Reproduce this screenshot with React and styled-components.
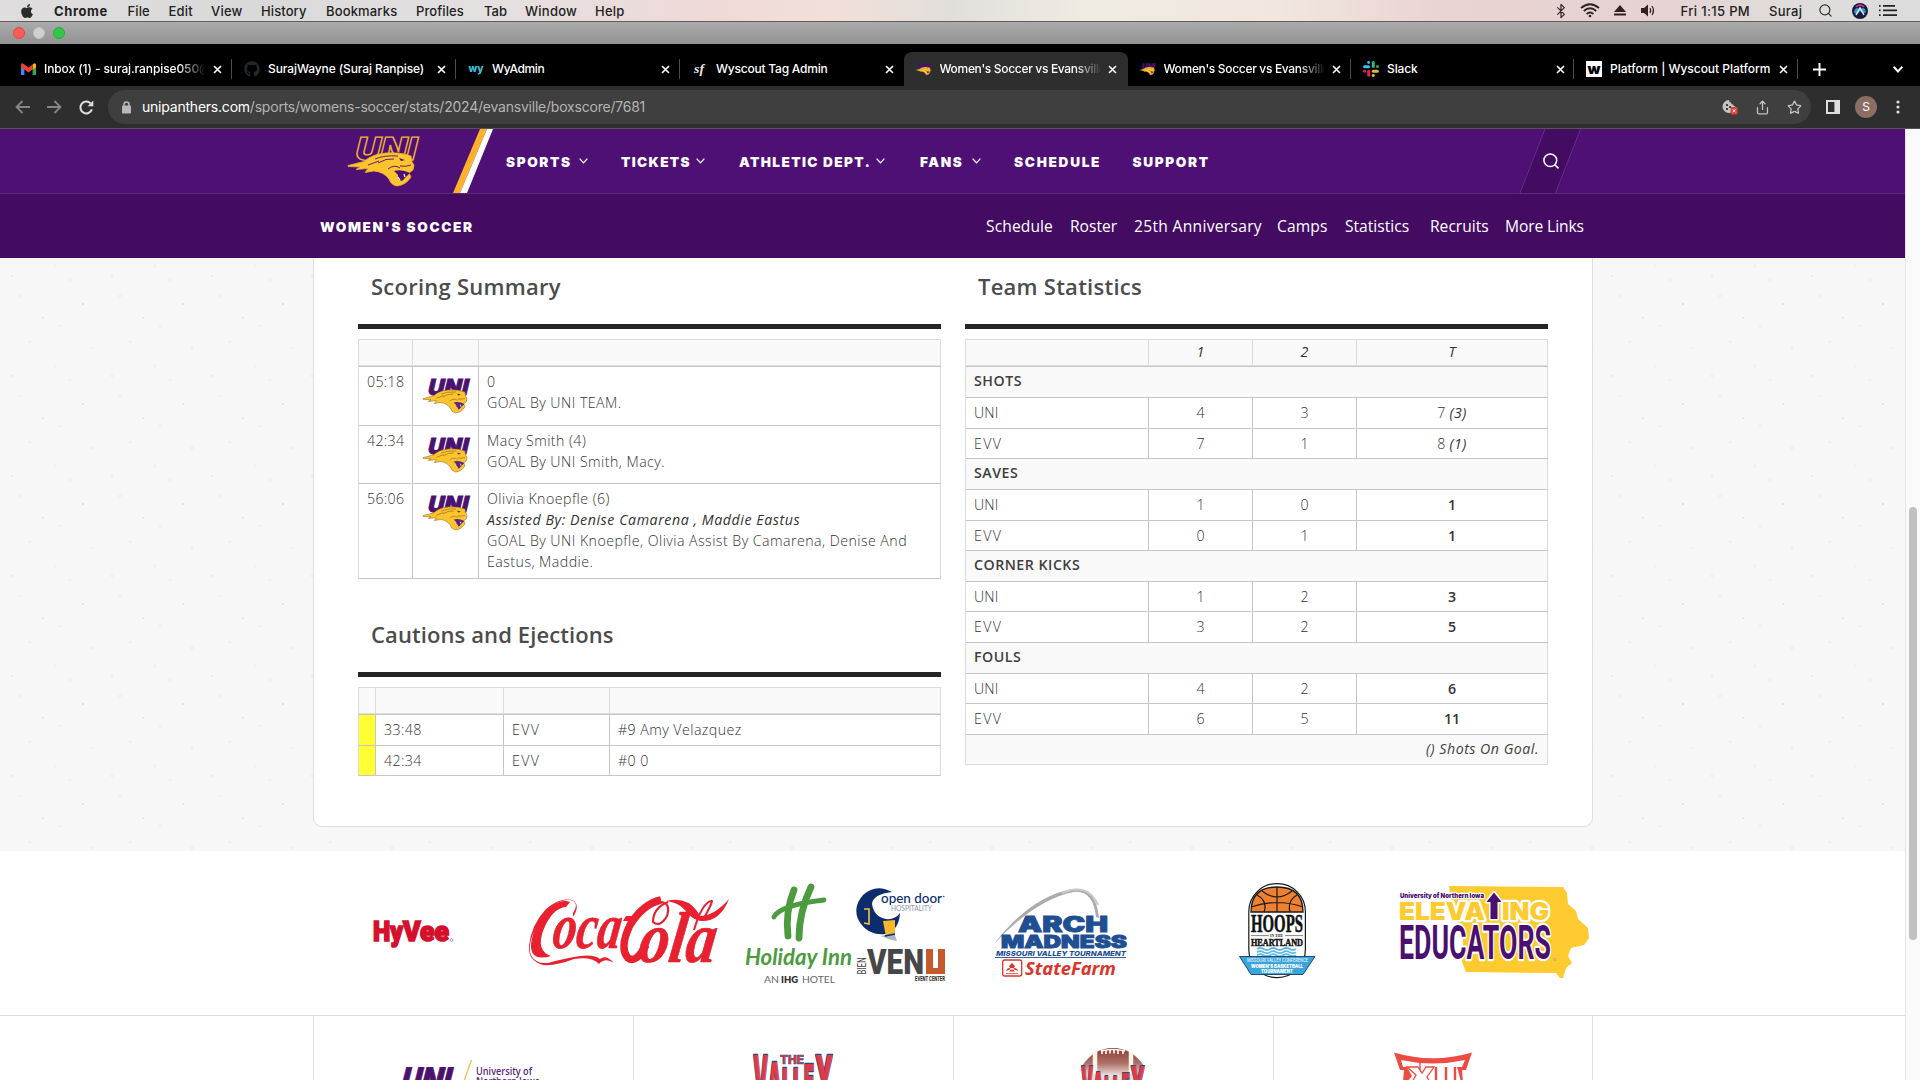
import React from "react";
import styled, { createGlobalStyle } from "styled-components";
import { FaApple, FaGithub } from "react-icons/fa";
import { Search, Star, Share, Bluetooth } from "lucide-react";

const ui = `Inter, "Liberation Sans", sans-serif`;
const body = `"Open Sans", "Noto Sans", sans-serif`;

const Global = createGlobalStyle`
  * { box-sizing: border-box; }
  html, body { margin: 0; padding: 0; overflow: hidden; background: #fff; }
  svg { display: block; flex: none; overflow: visible; }
`;

const Screen = styled.div`
  width: 1920px;
  height: 1080px;
  overflow: hidden;
  display: flex;
  flex-direction: column;
  font-family: ${ui};
  background: #fff;
`;

/* ---------- system menu bar ---------- */
const MenuBar = styled.div`
  height: 22px;
  flex: none;
  display: flex;
  align-items: center;
  border-bottom: 1px solid #665c5a;
  padding: 0 23px 0 20px;
  color: #222;
  font-size: 13px;
  background: linear-gradient(90deg, #dfdddd 0, #dad9d9 260px, #e3e0e0 480px, #efdad8 720px, #f2dfd9 830px, #e2dfdb 950px, #efebe3 1080px, #f1e7df 1280px, #e9d3d3 1440px, #e6d2d2 1650px, #dfdcdb 1790px, #dcdcdc 1920px);
`;
const MenuWord = styled.span`
  width: ${(p) => p.$w}px;
  flex: none;
  white-space: nowrap;
  line-height: 20px;
  letter-spacing: ${(p) => p.$ls || 0}px;
  font-weight: ${(p) => (p.$bold ? 700 : 450)};
`;
const Spacer = styled.div`
  flex: 1;
`;
const MenuIcon = styled.span`
  width: ${(p) => p.$w}px;
  flex: none;
  display: flex;
  justify-content: center;
`;

const TitleStrip = styled.div`
  height: 22px;
  flex: none;
  display: flex;
  align-items: center;
  gap: 8px;
  padding-left: 13px;
  background: linear-gradient(#ababab, #929292);
`;
const Light = styled.span`
  width: 12px;
  height: 12px;
  border-radius: 50%;
  background: ${(p) => p.$c};
  border: 1px solid ${(p) => p.$b};
`;

/* ---------- browser tabs ---------- */
const TabStrip = styled.div`
  height: 42px;
  flex: none;
  display: flex;
  padding: 8px 0 0 8px;
  background: #000;
  color: #fff;
`;
const TabBox = styled.div`
  width: ${(p) => p.$w}px;
  height: 34px;
  flex: none;
  display: flex;
  align-items: center;
  padding-left: 12px;
  background: ${(p) => (p.$active ? "#2e2e2e" : "transparent")};
  border-radius: 8px 8px 0 0;
`;
const TabIcon = styled.span`
  width: 16px;
  display: flex;
  justify-content: center;
  margin-right: 8px;
  flex: none;
`;
const TabTitle = styled.span`
  width: 160px;
  flex: none;
  overflow: hidden;
  white-space: nowrap;
  font-size: 12px;
  font-weight: 500;
  line-height: 20px;
  letter-spacing: ${(p) => p.$ls || 0}px;
  mask-image: ${(p) => (p.$fade ? "linear-gradient(90deg, #000 134px, transparent 162px)" : "none")};
`;
const TabClose = styled.span`
  width: 26px;
  display: flex;
  justify-content: center;
`;
const TabRule = styled.span`
  width: 1px;
  height: 20px;
  margin-left: auto;
  background: ${(p) => (p.$hide ? "transparent" : "#4a4a4a")};
`;
const StripButton = styled.span`
  width: ${(p) => p.$w}px;
  height: 34px;
  display: flex;
  align-items: center;
  justify-content: center;
  margin-left: ${(p) => p.$ml || 0}px;
`;

const Toolbar = styled.div`
  height: 43px;
  flex: none;
  display: flex;
  align-items: center;
  background: #2e2e2e;
  border-bottom: 1px solid #555;
  padding-left: 6px;
`;
const ToolButton = styled.span`
  width: ${(p) => p.$w || 32}px;
  flex: none;
  display: flex;
  justify-content: center;
  color: ${(p) => p.$c || "#dedede"};
`;
const Address = styled.div`
  width: 1703px;
  height: 34px;
  flex: none;
  margin-left: 6px;
  border-radius: 17px;
  background: #3f3f3f;
  display: flex;
  align-items: center;
  padding: 0 1px 0 13px;
  font-size: 14px;
  line-height: 20px;
  letter-spacing: ${(p) => p.$ls}px;
  color: #b4b4b4;
`;
const Host = styled.span`
  color: #fff;
  margin-left: 10px;
`;
const Avatar = styled.span`
  width: 22px;
  height: 22px;
  flex: none;
  border-radius: 50%;
  background: #8d6e64;
  color: #fff;
  font-size: 12px;
  line-height: 22px;
  text-align: center;
  margin-right: 10px;
`;

/* ---------- site ---------- */
const Viewport = styled.div`
  flex: 1;
  display: flex;
  min-height: 0;
`;
const Site = styled.div`
  width: 1905px;
  flex: none;
  overflow: hidden;
`;
const ScrollTrack = styled.div`
  width: 15px;
  background: #fafafa;
  border-left: 1px solid #e6e6e6;
  padding: 378px 0 0 3px;
`;
const ScrollThumb = styled.div`
  width: 8px;
  height: 433px;
  border-radius: 4px;
  background: #c1c1c1;
`;

const MainNav = styled.nav`
  height: 65px;
  display: flex;
  align-items: center;
  background: #4f1075;
  border-bottom: 1px solid #5d2a7d;
  padding-left: 348px;
`;
const Slash = styled.div`
  margin: 0 13px 0 33px;
`;
const NavItem = styled.div`
  width: ${(p) => p.$w}px;
  flex: none;
  display: flex;
  align-items: center;
  color: #fff;
  font-size: 13.6px;
  font-weight: 900;
  line-height: 20px;
  white-space: nowrap;
`;
const NavLabel = styled.span`
  width: ${(p) => p.$w}px;
  padding-top: 2px;
  letter-spacing: ${(p) => p.$ls}px;
`;
const Chevron = styled.span`
  margin-left: 8px;
`;
const SearchBox = styled.div`
  margin-left: auto;
  margin-right: 324px;
`;

const SportNav = styled.nav`
  height: 64px;
  display: flex;
  align-items: center;
  background: #430c62;
  color: #fff;
  padding: 1px 0 0 320px;
`;
const SportName = styled.span`
  width: 666px;
  font-size: 13.6px;
  font-weight: 900;
  letter-spacing: 1.66px;
`;
const SportLink = styled.span`
  width: ${(p) => p.$w}px;
  flex: none;
  white-space: nowrap;
  font-family: ${body};
  font-size: 15.6px;
  font-weight: 500;
  padding-bottom: 2px;
  letter-spacing: ${(p) => p.$ls || 0}px;
`;

const Paper = styled.main`
  height: 593px;
  padding-left: 313px;
  background-color: #f7f7f7;
  background-image:
    radial-gradient(circle at 12px 18px, #e9e9e9 0.6px, transparent 1.3px),
    radial-gradient(circle at 83px 46px, #dadada 0.5px, transparent 1.2px),
    radial-gradient(circle at 43px 60px, #e0e0e0 0.5px, transparent 1.2px),
    radial-gradient(circle at 60px 68px, #ebebeb 0.6px, transparent 1.3px),
    radial-gradient(circle at 30px 84px, #eeeeee 1px, transparent 1.8px),
    radial-gradient(circle at 20px 38px, #f0f0f0 1px, transparent 2px),
    radial-gradient(circle at 70px 22px, #f0f0f0 1px, transparent 2px),
    radial-gradient(circle at 55px 8px, #f1f1f1 1px, transparent 2px),
    radial-gradient(circle at 92px 90px, #efefef 1px, transparent 2px);
  background-size: 100px 100px;
`;
const Card = styled.section`
  width: 1280px;
  height: 569px;
  background: #fff;
  border: 1px solid #dedede;
  border-top: none;
  border-radius: 0 0 9px 9px;
  padding-left: 44px;
  display: flex;
  gap: 24px;
  font-family: ${body};
  font-size: 14.2px;
  font-weight: 300;
  color: #333;
  letter-spacing: 0.45px;
`;
const Column = styled.div`
  width: 583px;
`;
const Heading = styled.h2`
  margin: ${(p) => p.$mt || 0}px 0 10px;
  height: 71px;
  border-bottom: 5px solid #252525;
  padding-left: 13px;
  font-size: 22px;
  font-weight: 600;
  line-height: 56px;
  color: #4c4c4c;
  letter-spacing: ${(p) => p.$ls ?? 0.25}px;
`;
const Grid = styled.div`
  border-left: 1px solid #dcdcdc;
`;
const HeadRow = styled.div`
  height: 28px;
  display: grid;
  grid-template-columns: ${(p) => p.$cols};
  background: #f9f9f9;
  border-top: 1px solid #dcdcdc;
  border-bottom: 1px solid #c6c6c6;
  box-shadow: inset 0 -1px #dedede;
`;
const HeadCell = styled.div`
  border-right: 1px solid #dcdcdc;
  text-align: center;
  font-style: italic;
  font-weight: 500;
  font-size: 14.2px;
  line-height: 24px;
  letter-spacing: 0;
`;
const Row = styled.div`
  height: ${(p) => p.$h}px;
  display: grid;
  grid-template-columns: ${(p) => p.$cols};
  border-bottom: 1px solid #c6c6c6;
`;
const Cell = styled.div`
  border-right: 1px solid #c6c6c6;
  padding: ${(p) => (p.$tall ? "3.6px 0 0 8px" : "0 0 0 8px")};
  line-height: ${(p) => (p.$tall ? 21.3 : 29)}px;
  white-space: nowrap;
  letter-spacing: ${(p) => p.$ls ?? 0.45}px;
  background: ${(p) => p.$bg || "transparent"};
  &:last-child {
    border-right-color: #dcdcdc;
  }
`;
const NumCell = styled(Cell)`
  padding: 0;
  text-align: center;
  font-weight: ${(p) => (p.$bold ? 600 : 300)};
  letter-spacing: 0;
  i {
    font-weight: 500;
    letter-spacing: 0.4px;
  }
`;
const LogoCell = styled(Cell)`
  padding: 11px 0 0 10px;
`;
const Line = styled.div`
  letter-spacing: ${(p) => (p.$em ? 0.56 : 0.46)}px;
  font-style: ${(p) => (p.$em ? "italic" : "normal")};
  font-weight: ${(p) => (p.$em ? 500 : 300)};
`;
const GroupRow = styled.div`
  height: ${(p) => p.$h}px;
  border-bottom: 1px solid ${(p) => (p.$last ? "#dcdcdc" : "#c6c6c6")};
  border-right: 1px solid #dcdcdc;
  background: #f9f9f9;
  padding: 0 8px 0 8px;
  line-height: 27.5px;
  font-weight: ${(p) => (p.$last ? 500 : 550)};
  color: #3f3f3f;
  font-size: 14.2px;
  text-align: ${(p) => (p.$last ? "right" : "left")};
  font-style: ${(p) => (p.$last ? "italic" : "normal")};
  letter-spacing: ${(p) => (p.$last ? 0.5 : 0.5)}px;
`;

const Sponsors = styled.section`
  height: 165px;
  display: flex;
  align-items: flex-start;
  padding: 29px 0 0 370px;
  border-bottom: 1px solid #dedede;
`;
const SponsorSlot = styled.div`
  margin-left: ${(p) => p.$gap || 0}px;
`;
const Affiliates = styled.section`
  display: grid;
  grid-template-columns: 320px 320px 320px 319px;
  width: 1280px;
  height: 64px;
  margin-left: 313px;
  border-left: 1px solid #dedede;
`;
const Affiliate = styled.div`
  border-right: 1px solid #dedede;
  display: flex;
  padding-left: ${(p) => p.$pl}px;
`;

/* ---------- drawings ---------- */
const T = ({ w, size, weight = 700, font = "Inter", ...rest }) => (
  <text
    textLength={w}
    lengthAdjust="spacingAndGlyphs"
    fontSize={size}
    fontWeight={weight}
    fontFamily={`${font}, "Liberation Sans", sans-serif`}
    {...rest}
  />
);

const Panther = ({ w, h, outline }) => (
  <svg width={w} height={h} viewBox="0 0 72 50" preserveAspectRatio="none">
    <g transform="skewX(-14)">
      <T
        x="11.5"
        y="24"
        w="61"
        size="31.5"
        weight="900"
        fill={outline ? "#4f1075" : "#4b116f"}
        stroke={outline ? "#f0b13a" : "#4b116f"}
        strokeWidth="1.3"
      >
        UNI
      </T>
    </g>
    <path d="M0 29.5 L16 25.5 Q24 18 38 17 Q52 16 63 20 L64 26 L66 29 L65 34 L61 37 L63 41 Q58 49 49 50 Q43 49 41 43 Q36 36 26 35 L17 36.5 L20 32.5 L8 33.5 L12 31 L0 30.5 Z" fill="#fdc52d" stroke={outline ? "#e9b02f" : "#8a6420"} strokeWidth="0.8" />
    <path d="M46 35 Q54 33 62 37 L58 41 L54 45 Q49 44 50 39 Z" fill={outline ? "#4f1075" : "#5b2480"} />
    <path d="M50 41 l2 3 M56 38 l1 3" stroke="#fff" strokeWidth="1.2" />
    <path d="M27 23 Q36 19 50 20 M30 27 Q38 22 46 23 M20 29 L31 25 M40 33 Q46 28 52 32 M52 30 Q58 31 63 29" fill="none" stroke={outline ? "#4f1075" : "#8a6420"} strokeWidth="0.9" />
    <path d="M51 22 l6 2 l-4 1 z" fill={outline ? "#4f1075" : "#4b2a20"} />
  </svg>
);

const ChevronDown = ({ size = 9, sw = 1.5 }) => (
  <svg width={size} height={size * 0.65} viewBox="0 0 10 6.5" fill="none" stroke="#fff" strokeWidth={sw}>
    <path d="M0.7 0.7 L5 5.4 L9.3 0.7" />
  </svg>
);

const CloseX = () => (
  <svg width="9" height="9" viewBox="0 0 9 9" stroke="#fff" strokeWidth="1.6">
    <path d="M1 1 L8 8 M8 1 L1 8" />
  </svg>
);

const Gmail = () => (
  <svg width="15" height="12" viewBox="0 0 15 12">
    <path d="M0 2 V12 H3.4 V5.5 Z" fill="#4285f4" />
    <path d="M15 2 V12 H11.6 V5.5 Z" fill="#34a853" />
    <path d="M11.6 1.6 L13 .4 Q15 0 15 2 V4.2 L11.6 6.5 Z" fill="#fbbc04" />
    <path d="M3.4 1.6 L7.5 4.6 L11.6 1.6 V6.4 L7.5 9.4 L0 4 V2 Q0 0 2 .4 Z" fill="#ea4335" />
  </svg>
);
const Slack = () => (
  <svg width="16" height="16" viewBox="0 0 16 16">
    <g fill="#36c5f0"><rect x="0" y="4.2" width="7" height="3" rx="1.5" /><rect x="4.2" y="0" width="2.8" height="3" rx="1.4" /></g>
    <g fill="#2eb67d"><rect x="8.8" y="0" width="3" height="7" rx="1.5" /><rect x="13" y="4.2" width="3" height="2.8" rx="1.4" /></g>
    <g fill="#ecb22e"><rect x="8.8" y="8.8" width="7" height="3" rx="1.5" /><rect x="8.8" y="13" width="3" height="3" rx="1.4" /></g>
    <g fill="#e01e5a"><rect x="4.2" y="8.8" width="3" height="7" rx="1.5" /><rect x="0" y="8.8" width="3" height="3" rx="1.4" /></g>
  </svg>
);
const Wy = () => (
  <svg width="16" height="16" viewBox="0 0 16 16">
    <T x="0.5" y="11" w="15" size="11" weight="800" fill="#3cc0dc">wy</T>
  </svg>
);
const Sf = () => (
  <svg width="14" height="16" viewBox="0 0 14 16">
    <T x="1" y="12" w="10" size="13" font="Liberation Serif" fontStyle="italic" fill="#e8e8e8">sf</T>
  </svg>
);
const WBadge = () => (
  <svg width="16" height="16" viewBox="0 0 16 16">
    <rect width="16" height="16" fill="#fff" />
    <T x="1.5" y="12.5" w="13" size="13" weight="900" fill="#000">w</T>
  </svg>
);

const HyVee = () => (
  <svg width="86" height="104" viewBox="370 880 86 104" fill="#d5102c">
    <T x="373" y="941" w="30" size="28" weight="900" font="Roboto" stroke="#d5102c" strokeWidth="1.7">Hy</T>
    <T x="403" y="941" w="46" size="28" weight="900" font="Roboto" stroke="#d5102c" strokeWidth="1.7">Vee</T>
    <circle cx="451.5" cy="940" r="1.4" fill="none" stroke="#d5102c" strokeWidth="0.5" />
  </svg>
);

const CocaCola = () => (
  <svg width="206" height="104" viewBox="526 880 206 104" fill="#e8202f">
    <g transform="translate(0 947.5) skewX(-8)">
      <T x="551" y="0" w="68" size="64" font="Liberation Serif" fontStyle="italic" stroke="#e8202f" strokeWidth="0.6">oca</T>
    </g>
    <g transform="translate(0 962) skewX(-8)">
      <T x="637" y="0" w="77" size="72" font="Liberation Serif" fontStyle="italic" stroke="#e8202f" strokeWidth="0.6">ola</T>
    </g>
    <path d="M573 913 Q580 902 570 900 Q556 899 543 916 Q528 938 530 952 Q533 964 548 963 Q562 959 580 956 Q594 954 600 959 Q606 954 614 963 Q605 957 599 964 Q592 956 574 959 Q556 966 543 965 Q528 961 529 946 Q531 925 546 909 Q562 896 574 901 Q580 906 573 917 Z" />
    <path d="M566 907 Q552 908 543 931 Q536 951 551 956 Q530 962 531 944 Q535 918 553 905 Q563 899 570 902 Z" />
    <path d="M661 900 Q643 904 630 925 Q619 948 628 958 Q636 964 646 945" fill="none" stroke="#e8202f" strokeWidth="7.5" />
    <path d="M661 902 Q671 903 667 916 Q660 928 653 922 Q653 908 668 902" fill="none" stroke="#e8202f" strokeWidth="2.2" />
    <path d="M666 901 Q686 896 697 911 L700 916 Q714 916 729 899 Q720 922 701 921 Q692 920 684 909 Q677 902 666 901 Z" />
    <path d="M703 920 Q715 898 711 901 Q702 903 694 930" fill="none" stroke="#e8202f" strokeWidth="2" />
    <path d="M626 916 h7 l-2 5 h-8 z" />
  </svg>
);

const Hotels = () => (
  <svg width="206" height="104" viewBox="742 880 206 104">
    <g fill="none" stroke="#4c9b3f" strokeWidth="6.8" strokeLinecap="round">
      <path d="M794 890 Q785 912 788 936" />
      <path d="M811 887 Q799 912 799 938" />
      <path d="M774 917 Q780 905 824 900" strokeWidth="4.8" />
    </g>
    <T x="745" y="965" w="107" size="23" weight="700" font="Lato" fontStyle="italic" fill="#4c9b3f">Holiday Inn</T>
    <T x="764" y="983" w="15" size="9.5" weight="400" font="Lato" fill="#666">AN</T>
    <T x="781" y="983" w="17" size="9.5" weight="800" font="Lato" fill="#333">IHG</T>
    <T x="802" y="983" w="33" size="9.5" weight="400" font="Lato" fill="#666">HOTEL</T>
    <path d="M892 892 Q876 883 863 895 Q852 908 859 921 Q868 936 886 934 Q899 930 900 913 Q895 920 886 919 Q874 917 872 904 Q873 894 892 892 Z" fill="#0c2c6b" />
    <path d="M864 909 h5 v15 l-5 -1" fill="none" stroke="#f7c23c" strokeWidth="1.6" />
    <path d="M883 921 l12 -1 v14 l-9 3 z" fill="#f8b829" />
    <path d="M881 936 l13 -3 l3 8 l-9 -2 z" fill="#a9b4c4" />
    <path d="M885 936 l10 -2" stroke="#0c2c6b" strokeWidth="1.5" />
    <T x="881" y="903" w="61" size="13" weight="500" font="Lato" fill="#0c2c6b">open door</T>
    <circle cx="943.8" cy="896.5" r="0.7" fill="#0c2c6b" />
    <T x="891" y="911" w="41" size="7" weight="400" font="Lato" fill="#8c95a6">HOSPITALITY</T>
    <T x="0" y="0" w="17" size="12" weight="400" font="Roboto" fill="#444" transform="translate(866 974.5) rotate(-90)">BIEN</T>
    <T x="867" y="974" w="57" size="34.5" weight="900" font="Roboto" fill="#464749">VEN</T>
    <path d="M926 949 h7 v19 h5 v-19 h7 v25 h-19 z" fill="#c55a2d" />
    <T x="915" y="981" w="30" size="7" weight="700" font="Roboto" fill="#222">EVENT CENTER</T>
  </svg>
);

const ArchMadness = () => (
  <svg width="138" height="104" viewBox="992 880 138 104">
    <path d="M994 944 Q1030 897 1072 889 Q1096 886 1099 918 L1096 917 Q1093 890 1074 892 Q1036 899 994 944 Z" fill="#a9abae" />
    <path d="M1062 893 Q1088 882 1098 905" fill="none" stroke="#c9cbcd" strokeWidth="2" />
    <g fill="#1f4f92" stroke="#1f4f92" strokeWidth="0.9">
      <T x="1018" y="932" w="90" size="21" weight="900">ARCH</T>
      <T x="1001" y="948" w="126" size="17.5" weight="900">MADNESS</T>
    </g>
    <T x="996" y="955.8" w="130" size="6.6" weight="800" fontStyle="italic" fill="#1f4f92">MISSOURI VALLEY TOURNAMENT</T>
    <path d="M995 957.5 H1126" stroke="#1f4f92" strokeWidth="0.9" />
    <rect x="1002.7" y="960" width="19" height="16" rx="2" fill="#fff" stroke="#d8362b" strokeWidth="1.3" />
    <path d="M1012 963 l3 3 l-1 2 h-4 l-1 -2 z M1006 971 q2 -5 5 -2 z M1018 971 q-2 -5 -5 -2 z M1009 971.5 q3 -4 6 0 z" fill="#d8362b" />
    <path d="M1006 973.6 h12" stroke="#d8362b" strokeWidth="0.8" />
    <T x="1025" y="975" w="91" size="18.5" weight="700" font="Noto Sans" fontStyle="italic" fill="#d8362b">StateFarm</T>
  </svg>
);

const Hoops = () => (
  <svg width="82" height="104" viewBox="1236 880 82 104">
    <rect x="1248.8" y="883.6" width="56.6" height="94" rx="28" fill="#fff" stroke="#1a1a1a" strokeWidth="1.2" />
    <path d="M1251 912 Q1251 887 1277 887 Q1303 887 1303 912 Z" fill="#ee8030" stroke="#1a1a1a" strokeWidth="1.3" />
    <path d="M1277 887 V912 M1251 907 Q1277 898 1303 907 M1257 895 Q1268 901 1264 912 M1297 895 Q1287 901 1290 912 M1262 891 Q1277 903 1292 891" fill="none" stroke="#1a1a1a" strokeWidth="1.2" />
    <T x="1251" y="932" w="52" size="26" weight="700" font="Liberation Serif" fill="#111" stroke="#111" strokeWidth="0.6">HOOPS</T>
    <path d="M1251 935.6 h18 M1285 935.6 h18" stroke="#333" strokeWidth="0.6" />
    <T x="1270" y="937.3" w="13" size="4.5" weight="700" font="Liberation Serif" fill="#222">IN THE</T>
    <T x="1251" y="945.5" w="52" size="10.2" weight="700" font="Liberation Serif" fill="#111" stroke="#111" strokeWidth="0.5">HEARTLAND</T>
    <g fill="none" stroke="#5db8e4" strokeWidth="1.8">
      {[949, 952.2, 955.2].map((y) => (
        <path key={y} d={`M1257 ${y} q3 -2 6.5 0 t6.5 0 t6.5 0 t6.5 0 t6.5 0 t6.5 0`} />
      ))}
    </g>
    <path d="M1239.5 956.5 H1315 L1303 974.5 H1251 Z" fill="#3ba4da" stroke="#123f5c" strokeWidth="0.9" />
    <T x="1247" y="962.2" w="61" size="4.4" weight="500" fill="#e8f6ff">MISSOURI VALLEY CONFERENCE</T>
    <T x="1251" y="968" w="52" size="5.2" weight="900" fill="#fff">WOMEN'S BASKETBALL</T>
    <T x="1261" y="973" w="32" size="4.6" weight="900" fill="#fff">TOURNAMENT</T>
  </svg>
);

const Elevating = () => (
  <svg width="196" height="104" viewBox="1396 880 196 104">
    <path d="M1449 886 L1563 887 L1567 893 L1568 904 L1576 911 L1578 919 L1588 928 L1589 938 L1584 945 L1571 948 L1568 956 L1572 963 L1566 968 L1563 978 L1560 978 L1556 973 L1466 972 L1462 962 L1463 940 L1452 905 Z" fill="#fdca2f" />
    <g stroke="#fff" strokeWidth="4.5" strokeLinejoin="round" paintOrder="stroke">
      <T x="1399" y="919.5" w="86" size="25" weight="900" fill="#fdca2f">ELEVA</T>
      <T x="1400" y="898.4" w="84" size="6.4" weight="900" fill="#4a0f6f" strokeWidth="2.5">University of Northern Iowa</T>
      <T x="1502" y="919.5" w="47" size="25" weight="900" fill="#fdca2f">ING</T>
      <T x="1399" y="958.5" w="152" size="49" weight="700" font="Roboto" fill="#4a0f6f">EDUCATORS</T>
      <path d="M1494 892.5 L1501.5 902 H1497.5 V919 H1490.5 V902 H1486.5 Z" fill="#4a0f6f" strokeWidth="3" />
    </g>
    <T x="1552" y="961" w="4" size="3" weight="400" fill="#a88ab8">TM</T>
  </svg>
);

const UniLockup = () => (
  <svg width="150" height="64" viewBox="400 1016 150 64">
    <g transform="translate(0 1092) skewX(-14)">
      <T x="399" y="0" w="50" size="34" weight="900" fill="#4b116f" stroke="#4b116f" strokeWidth="0.8">UNI</T>
    </g>
    <path d="M471.5 1060 L460 1092" stroke="#f3bf4a" strokeWidth="1.3" />
    <T x="476" y="1074.5" w="56" size="10" weight="600" font="Open Sans" fill="#56297a">University of</T>
    <T x="476" y="1085" w="64" size="10" weight="600" font="Open Sans" fill="#56297a">Northern Iowa</T>
  </svg>
);

const valleyLetters = [
  ["V", 753, 15, 1055],
  ["A", 768, 13, 1062],
  ["L", 782, 10, 1068],
  ["L", 793, 10, 1068],
  ["E", 804, 10, 1064],
  ["Y", 815, 18, 1055],
];
const ValleyWord = () => (
  <g fill="#e23a45" stroke="#1d4b86" strokeWidth="2.6" strokeLinejoin="round" paintOrder="stroke">
    {valleyLetters.map(([ch, x, w, top], i) => (
      <T key={i} x={x} y="1096" w={w} size={(1096 - top) / 0.727} weight="900">{ch}</T>
    ))}
  </g>
);

const Valley = () => (
  <svg width="84" height="64" viewBox="751 1016 84 64">
    <ValleyWord />
    <T x="780" y="1063.5" w="24" size="11.5" weight="900" fill="#e23a45" stroke="#1d4b86" strokeWidth="0.5">THE</T>
  </svg>
);

const ValleyFootball = () => (
  <svg width="68" height="64" viewBox="1079 1016 68 64">
    <defs>
      <linearGradient id="leather" x1="0" y1="0" x2="0" y2="1">
        <stop offset="0" stopColor="#8c3c34" />
        <stop offset="0.45" stopColor="#ae7068" />
        <stop offset="0.8" stopColor="#eedcd8" />
      </linearGradient>
    </defs>
    <path d="M1082 1066 Q1094 1048 1113 1048 Q1132 1048 1144 1066 L1140 1082 H1086 Z" fill="url(#leather)" />
    <path d="M1095 1052 V1074 M1131 1052 V1074" stroke="#fbf3e4" strokeWidth="4.5" />
    <path d="M1101 1051 Q1113 1048 1125 1051" fill="none" stroke="#fff" strokeWidth="1.4" />
    <path d="M1102 1050 v4 M1106 1050 v4 M1110 1049.5 v4 M1114 1049.5 v4 M1118 1050 v4 M1123 1050 v4" stroke="#fff" strokeWidth="1.6" />
    <g transform="translate(1081 1066) scale(0.8) translate(-753 -1055)">
      <ValleyWord />
    </g>
  </svg>
);

const BigTwelve = () => (
  <svg width="82" height="64" viewBox="1392 1016 82 64">
    <path d="M1394 1052.5 Q1433 1064 1472 1052.5 L1466 1070 H1462 L1463 1082 H1403 L1404 1070 H1400 Z" fill="#ef4b45" />
    <path d="M1401 1060 Q1433 1067 1465 1060 L1462 1067 H1457 L1459 1074 L1461 1082 H1407 L1412 1076 L1407 1067 H1403 Z" fill="#fff" />
    <path d="M1407 1067 h11 l4 6 l4 -6 h8 l-7 10 l4 7 h-9 l-2 -3 l-2 3 h-7 l5 -9 z" fill="#fff" stroke="#ef4b45" strokeWidth="1.3" />
    <path d="M1436 1067 v16 M1446 1067 v16 M1455 1067 v16" stroke="#ef4b45" strokeWidth="2.4" />
    <path d="M1420 1062 V1070" stroke="#ef4b45" strokeWidth="1.4" />
  </svg>
);

/* ---------- data ---------- */
const menus = [
  ["Chrome", 73.5, true, 0.6],
  ["File", 41, false, 0.1],
  ["Edit", 42.5, false, 0.2],
  ["View", 50, false, 0.2],
  ["History", 65, false, 0.1],
  ["Bookmarks", 90, false, 0.15],
  ["Profiles", 68, false, 0.1],
  ["Tab", 41, false, 0],
  ["Window", 70, false, 0.25],
  ["Help", 40, false, 0.2],
];

const tabs = [
  { t: "Inbox (1) - suraj.ranpise050@gmail.com", icon: <Gmail />, fade: true, ls: -0.1, w: 224 },
  { t: "SurajWayne (Suraj Ranpise)", icon: <FaGithub size={16} color="#22272b" />, ls: -0.1, w: 224 },
  { t: "WyAdmin", icon: <Wy />, ls: -0.35, w: 224 },
  { t: "Wyscout Tag Admin", icon: <Sf />, noRule: true, ls: -0.22, w: 223.5 },
  { t: "Women's Soccer vs Evansville - Stats", icon: <Panther w={16} h={12} />, fade: true, active: true, ls: -0.32, w: 224 },
  { t: "Women's Soccer vs Evansville - Stats", icon: <Panther w={16} h={12} />, fade: true, ls: -0.32, w: 223.5 },
  { t: "Slack", icon: <Slack />, ls: -0.1, w: 223 },
  { t: "Platform | Wyscout Platform", icon: <WBadge />, ls: -0.03, w: 223.5 },
];

const nav = [
  ["SPORTS", 65, 115, 1.6, true],
  ["TICKETS", 67, 118, 1.35, true],
  ["ATHLETIC DEPT.", 129, 181, 1.42, true],
  ["FANS", 44, 94, 1.6, true],
  ["SCHEDULE", 86, 118.5, 1.72, false],
  ["SUPPORT", 78, 78, 1.65, false],
];

const links = [
  ["Schedule", 84, 0.1],
  ["Roster", 64],
  ["25th Anniversary", 143, 0.3],
  ["Camps", 68, 0.15],
  ["Statistics", 85],
  ["Recruits", 75],
  ["More Links", 80, -0.1],
];

const goals = [
  { time: "05:18", h: 59, lines: [["0"], ["GOAL By UNI TEAM."]] },
  { time: "42:34", h: 58, lines: [["Macy Smith (4)"], ["GOAL By UNI Smith, Macy."]] },
  {
    time: "56:06",
    h: 95,
    lines: [
      ["Olivia Knoepfle (6)"],
      ["Assisted By: Denise Camarena , Maddie Eastus", true],
      ["GOAL By UNI Knoepfle, Olivia Assist By Camarena, Denise And"],
      ["Eastus, Maddie."],
    ],
  },
];

const cautions = [
  ["33:48", "EVV", "#9 Amy Velazquez", 31],
  ["42:34", "EVV", "#0 0", 30],
];

const stats = [
  { name: "SHOTS", h: 31, rows: [["UNI", 4, 3, 7, 31, "(3)"], ["EVV", 7, 1, 8, 30, "(1)"]] },
  { name: "SAVES", h: 31, rows: [["UNI", 1, 0, 1, 31], ["EVV", 0, 1, 1, 30]] },
  { name: "CORNER KICKS", h: 31, rows: [["UNI", 1, 2, 3, 30], ["EVV", 3, 2, 5, 31]] },
  { name: "FOULS", h: 31, rows: [["UNI", 4, 2, 6, 30], ["EVV", 6, 5, 11, 31]] },
];

const teamSpacing = { UNI: 0.1, EVV: 1.4 };

const goalCols = "54px 66px 462px";
const cautionCols = "17px 128px 106px 331px";
const statCols = "183px 104px 104px 191px";

function SystemBar() {
  return (
    <MenuBar>
      <MenuIcon $w={14}><FaApple size={16} color="#2b2b2b" /></MenuIcon>
      <MenuIcon $w={20} />
      {menus.map(([name, w, bold, ls]) => (
        <MenuWord key={name} $w={w} $bold={bold} $ls={ls}>{name}</MenuWord>
      ))}
      <Spacer />
      <MenuIcon $w={20}><Bluetooth size={16} strokeWidth={1.9} color="#3a2a2a" /></MenuIcon>
      <MenuIcon $w={39}>
        <svg width="20" height="15" viewBox="0 0 20 15" fill="none" stroke="#2f2121" strokeWidth="1.8">
          <path d="M1 5 Q10 -2.6 19 5 M3.8 8 Q10 2.6 16.2 8 M6.6 11 Q10 8 13.4 11" />
          <circle cx="10" cy="13" r="1.3" fill="#2f2121" stroke="none" />
        </svg>
      </MenuIcon>
      <MenuIcon $w={21}>
        <svg width="12" height="11" viewBox="0 0 12 11" fill="#2f2121"><path d="M6 0 L12 7 H0 Z M0 8.6 H12 V10.6 H0 Z" /></svg>
      </MenuIcon>
      <MenuIcon $w={35}>
        <svg width="14" height="13" viewBox="0 0 14 13" fill="#2f2121">
          <path d="M0 4 H3 L7 0.5 V12.5 L3 9 H0 Z" />
          <path d="M9 4 Q10.5 6.5 9 9 M11 2 Q14 6.5 11 11" fill="none" stroke="#2f2121" strokeWidth="1.2" />
        </svg>
      </MenuIcon>
      <MenuIcon $w={15} />
      <MenuWord $w={88.5} $ls={0.35}>Fri 1:15 PM</MenuWord>
      <MenuWord $w={48} $ls={0.3}>Suraj</MenuWord>
      <MenuIcon $w={16}><Search size={15} strokeWidth={2} color="#333" /></MenuIcon>
      <MenuIcon $w={7} />
      <MenuIcon $w={39}>
        <svg width="16" height="16" viewBox="0 0 16 16">
          <circle cx="8" cy="8" r="8" fill="#1b1a3a" />
          <path d="M2 9 Q4 2 8 7 Q12 2 14 9 Q11 12 8 8 Q5 14 2 9" fill="#2e9fd6" />
          <path d="M4 12 L8 5 L12 12" fill="none" stroke="#f2e9ff" strokeWidth="1.4" />
          <path d="M4 4 Q8 0 12 4" fill="none" stroke="#c43b9c" strokeWidth="1.5" />
        </svg>
      </MenuIcon>
      <svg width="18" height="11" viewBox="0 0 18 11" fill="#222">
        <path d="M0 0h1.6v1.7H0z M0 4.6h1.6v1.7H0z M0 9.2h1.6v1.7H0z M4 0h12v1.7H4z M4 4.6h14v1.7H4z M4 9.2h14v1.7H4z" />
      </svg>
    </MenuBar>
  );
}

function BrowserChrome() {
  return (
    <>
      <TitleStrip>
        <Light $c="#fc5b57" $b="#df4744" />
        <Light $c="#d0d0d0" $b="#c2c2c2" />
        <Light $c="#33c748" $b="#27ab35" />
      </TitleStrip>
      <TabStrip>
        {tabs.map((tab, i) => (
          <TabBox key={i} $active={tab.active} $w={tab.w}>
            <TabIcon>{tab.icon}</TabIcon>
            <TabTitle $fade={tab.fade} $ls={tab.ls}>{tab.t}</TabTitle>
            <TabClose><CloseX /></TabClose>
            <TabRule $hide={tab.noRule || tab.active} />
          </TabBox>
        ))}
        <StripButton $w={44}>
          <svg width="13" height="13" viewBox="0 0 13 13" stroke="#fff" strokeWidth="1.9"><path d="M6.5 0 V13 M0 6.5 H13" /></svg>
        </StripButton>
        <StripButton $w={20} $ml={46}><ChevronDown size={10} sw={2} /></StripButton>
      </TabStrip>
      <Toolbar>
        <ToolButton $c="#868686">
          <svg width="15" height="14" viewBox="0 0 15 14" fill="none" stroke="currentColor" strokeWidth="1.8"><path d="M15 7 H1.5 M7.5 1 L1.5 7 L7.5 13" /></svg>
        </ToolButton>
        <ToolButton $c="#868686">
          <svg width="15" height="14" viewBox="0 0 15 14" fill="none" stroke="currentColor" strokeWidth="1.8"><path d="M0 7 H13.5 M7.5 1 L13.5 7 L7.5 13" /></svg>
        </ToolButton>
        <ToolButton>
          <svg width="15" height="15" viewBox="0 0 15 15" fill="none" stroke="currentColor" strokeWidth="2">
            <path d="M12.9 9.4 A5.9 5.9 0 1 1 11.6 3.4" />
            <path d="M14.3 0.5 V6.2 H8.6 Z" fill="currentColor" stroke="none" />
          </svg>
        </ToolButton>
        <Address $ls={-0.22}>
          <svg width="11" height="13" viewBox="0 0 11 13">
            <rect x="1" y="4.6" width="9" height="8" rx="1" fill="#b9b9b9" />
            <path d="M3 5 V3.4 a2.5 2.5 0 0 1 5 0 V5" fill="none" stroke="#b9b9b9" strokeWidth="1.5" />
          </svg>
          <Host>unipanthers.com</Host>/sports/womens-soccer/stats/2024/evansville/boxscore/7681
          <Spacer />
          <ToolButton>
            <svg width="16" height="16" viewBox="0 0 16 16">
              <path d="M7 1 a6.5 6.5 0 1 0 6.5 6.5 q-2 0 -2.5 -2 q-2 0 -2 -2 q-2 0 -2 -2.5 Z" fill="#c4c4c4" />
              <path d="M4 5h2v2H4z M4 9h2v2H4z M7 7h2v2H7z" fill="#3f3f3f" />
              <rect x="8.6" y="8" width="7" height="7.5" rx="1" fill="#d9453b" />
              <path d="M10.8 10.3 l2.6 3 m0 -3 l-2.6 3" stroke="#fff" strokeWidth="0.9" />
            </svg>
          </ToolButton>
          <ToolButton $c="#c4c4c4"><Share size={15} strokeWidth={2} /></ToolButton>
          <ToolButton $c="#c4c4c4"><Star size={15} strokeWidth={2.1} /></ToolButton>
        </Address>
        <ToolButton $w={44}>
          <svg width="14" height="14" viewBox="0 0 14 14">
            <path fill="#dedede" fillRule="evenodd" d="M0 0H14V14H0Z M2 2V12H8.4V2Z" />
          </svg>
        </ToolButton>
        <Avatar>S</Avatar>
        <ToolButton $w={22}>
          <svg width="4" height="14" viewBox="0 0 4 14" fill="#dedede"><circle cx="2" cy="2" r="1.6" /><circle cx="2" cy="7" r="1.6" /><circle cx="2" cy="12" r="1.6" /></svg>
        </ToolButton>
      </Toolbar>
    </>
  );
}

function SiteHeader() {
  return (
    <header>
      <MainNav>
        <Panther w={72} h={50} outline />
        <Slash>
          <svg width="40" height="64" viewBox="0 0 40 64">
            <path d="M27 0 H34 L7 64 H0 Z" fill="#ffb12b" />
            <path d="M34 0 H40 L14 64 H7 Z" fill="#fff" />
          </svg>
        </Slash>
        {nav.map(([name, w, slot, ls, drop]) => (
          <NavItem key={name} $w={slot}>
            <NavLabel $w={w} $ls={ls}>{name}</NavLabel>
            {drop && <Chevron><ChevronDown size={9} /></Chevron>}
          </NavItem>
        ))}
        <SearchBox>
          <svg width="63" height="64" viewBox="1519 129 63 64" fill="none">
            <path d="M1546 129 H1581.5 L1556.5 193 H1521 Z" fill="#430c62" />
            <path d="M1546 129 L1521 193 M1581.5 129 L1556.5 193" stroke="#612f80" />
            <ellipse cx="1551.3" cy="160.3" rx="6.4" ry="6.3" stroke="#fff" strokeWidth="1.5" />
            <path d="M1555.8 164.8 L1559.5 168.4" stroke="#fff" strokeWidth="1.6" />
          </svg>
        </SearchBox>
      </MainNav>
      <SportNav>
        <SportName>WOMEN'S SOCCER</SportName>
        {links.map(([name, w, ls]) => (
          <SportLink key={name} $w={w} $ls={ls}>{name}</SportLink>
        ))}
      </SportNav>
    </header>
  );
}

function BoxScore() {
  return (
    <Paper>
      <Card>
        <Column>
          <Heading>Scoring Summary</Heading>
          <Grid>
            <HeadRow $cols={goalCols}><HeadCell /><HeadCell /><HeadCell /></HeadRow>
            {goals.map((g) => (
              <Row key={g.time} $h={g.h} $cols={goalCols}>
                <Cell $tall $ls={0.3}>{g.time}</Cell>
                <LogoCell><Panther w={48} h={35} /></LogoCell>
                <Cell $tall>
                  {g.lines.map(([text, em]) => (
                    <Line key={text} $em={em}>{text}</Line>
                  ))}
                </Cell>
              </Row>
            ))}
          </Grid>
          <Heading $mt={27} $ls={0.1}>Cautions and Ejections</Heading>
          <Grid>
            <HeadRow $cols={cautionCols}><HeadCell /><HeadCell /><HeadCell /><HeadCell /></HeadRow>
            {cautions.map(([time, team, who, h]) => (
              <Row key={time} $h={h} $cols={cautionCols}>
                <Cell $bg="#ffff33" />
                <Cell $ls={0.4}>{time}</Cell>
                <Cell $ls={teamSpacing[team]}>{team}</Cell>
                <Cell>{who}</Cell>
              </Row>
            ))}
          </Grid>
        </Column>
        <Column>
          <Heading>Team Statistics</Heading>
          <Grid>
            <HeadRow $cols={statCols}><HeadCell /><HeadCell>1</HeadCell><HeadCell>2</HeadCell><HeadCell>T</HeadCell></HeadRow>
            {stats.map((group) => (
              <React.Fragment key={group.name}>
                <GroupRow $h={group.h}>{group.name}</GroupRow>
                {group.rows.map(([team, a, b, total, h, onGoal]) => (
                  <Row key={team} $h={h} $cols={statCols}>
                    <Cell $ls={teamSpacing[team]}>{team}</Cell>
                    <NumCell>{a}</NumCell>
                    <NumCell>{b}</NumCell>
                    <NumCell $bold={!onGoal}>{total}{onGoal && <i> {onGoal}</i>}</NumCell>
                  </Row>
                ))}
              </React.Fragment>
            ))}
            <GroupRow $h={30} $last>() Shots On Goal.</GroupRow>
          </Grid>
        </Column>
      </Card>
    </Paper>
  );
}

function Footer() {
  return (
    <footer>
      <Sponsors>
        <SponsorSlot><HyVee /></SponsorSlot>
        <SponsorSlot $gap={70}><CocaCola /></SponsorSlot>
        <SponsorSlot $gap={10}><Hotels /></SponsorSlot>
        <SponsorSlot $gap={44}><ArchMadness /></SponsorSlot>
        <SponsorSlot $gap={106}><Hoops /></SponsorSlot>
        <SponsorSlot $gap={78}><Elevating /></SponsorSlot>
      </Sponsors>
      <Affiliates>
        <Affiliate $pl={86}><UniLockup /></Affiliate>
        <Affiliate $pl={117}><Valley /></Affiliate>
        <Affiliate $pl={125}><ValleyFootball /></Affiliate>
        <Affiliate $pl={118}><BigTwelve /></Affiliate>
      </Affiliates>
    </footer>
  );
}

export default function App() {
  return (
    <Screen>
      <Global />
      <SystemBar />
      <BrowserChrome />
      <Viewport>
        <Site>
          <SiteHeader />
          <BoxScore />
          <Footer />
        </Site>
        <ScrollTrack><ScrollThumb /></ScrollTrack>
      </Viewport>
    </Screen>
  );
}
